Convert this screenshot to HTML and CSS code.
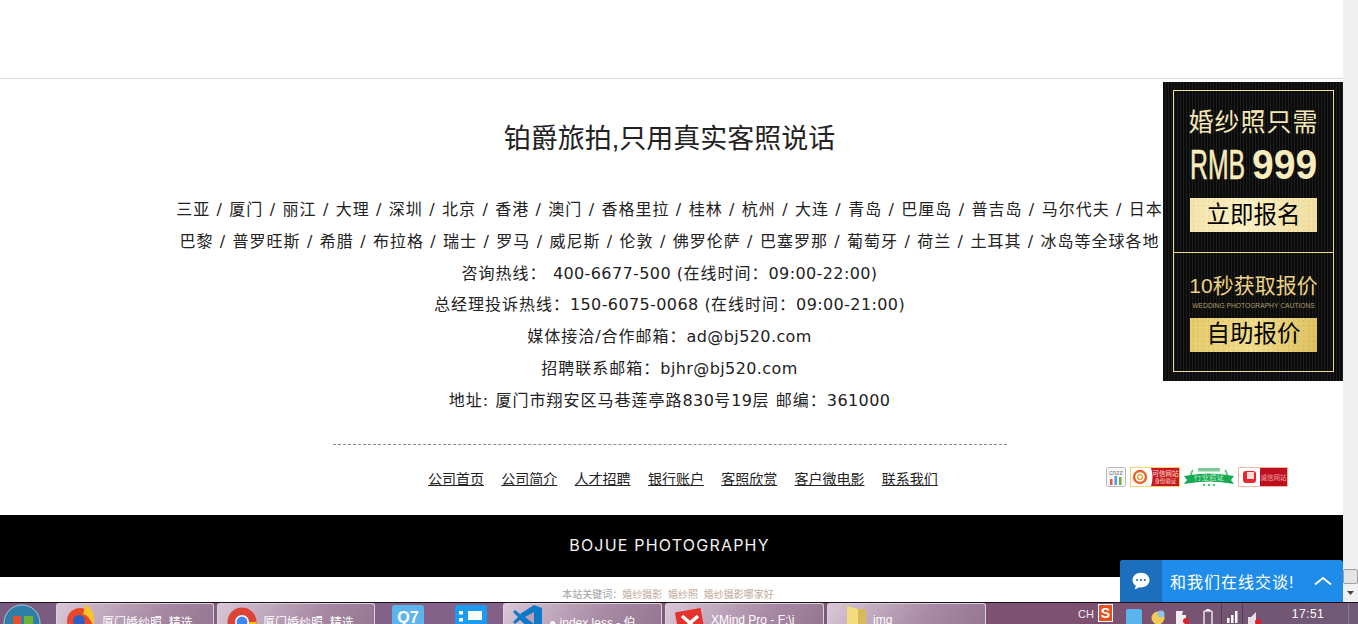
FILE: index.html
```html
<!DOCTYPE html>
<html lang="zh-CN">
  <head>
    <meta charset="UTF-8" />
    <title>铂爵旅拍</title>
    <link rel="stylesheet" href="styles.css">
  </head>
  <body>
    <div class="screen">
      <div class="browser">
        <div class="page">
          <div class="top-blank"></div>
          <div class="info">
            <h2 class="slogan">铂爵旅拍,只用真实客照说话</h2>
            <div class="lines">
              <p>三亚 / 厦门 / 丽江 / 大理 / 深圳 / 北京 / 香港 / 澳门 / 香格里拉 / 桂林 / 杭州 / 大连 / 青岛 / 巴厘岛 / 普吉岛 / 马尔代夫 / 日本</p>
              <p>巴黎 / 普罗旺斯 / 希腊 / 布拉格 / 瑞士 / 罗马 / 威尼斯 / 伦敦 / 佛罗伦萨 / 巴塞罗那 / 葡萄牙 / 荷兰 / 土耳其 / 冰岛等全球各地</p>
              <p>咨询热线： <span class="num">400-6677-500 (</span>在线时间：<span class="num">09:00-22:00)</span></p>
              <p>总经理投诉热线：<span class="num">150-6075-0068 (</span>在线时间：<span class="num">09:00-21:00)</span></p>
              <p>媒体接洽/合作邮箱：<span class="num">ad@bj520.com</span></p>
              <p>招聘联系邮箱：<span class="num">bjhr@bj520.com</span></p>
              <p>地址: 厦门市翔安区马巷莲亭路<span class="num">830</span>号<span class="num">19</span>层 邮编：<span class="num">361000</span></p>
            </div>
            <div class="dash"></div>
            <div class="link-row">
              <nav class="links">
                <a href="#">公司首页</a>
                <a href="#">公司简介</a>
                <a href="#">人才招聘</a>
                <a href="#">银行账户</a>
                <a href="#">客照欣赏</a>
                <a href="#">客户微电影</a>
                <a href="#">联系我们</a>
              </nav>
              <div class="badges">
                <svg width="20" height="20" viewBox="0 0 20 20">
                  <rect x="0.5" y="0.5" width="19" height="19" rx="1" fill="#f6f6f6" stroke="#bbb" />
                  <text x="10" y="7.500" font-size="6.500" text-anchor="middle" fill="#777" font-family="Liberation Sans">cnzz</text>
                  <rect x="4" y="12" width="2.500" height="6" fill="#e2574c" />
                  <rect x="8.500" y="9" width="2.500" height="9" fill="#4a9fd8" />
                  <rect x="13" y="10" width="2.500" height="8" fill="#6fae3e" />
                </svg>
                <svg width="50" height="20" viewBox="0 0 50 20">
                  <rect x="0.5" y="0.5" width="49" height="19" fill="#fff" stroke="#f5d36a" />
                  <path d="M21 1 H49 V19 H21 Q24 10 21 1 Z" fill="#c8161d" />
                  <circle cx="10" cy="10" r="6" fill="none" stroke="#e8622a" stroke-width="2.400" />
                  <circle cx="10" cy="10" r="2.400" fill="none" stroke="#f0a030" stroke-width="1.400" />
                  <text x="35.500" y="8.500" font-size="6.500" text-anchor="middle" fill="#fbe4df" font-family="Noto Sans CJK SC">可信网站</text>
                  <text x="35.500" y="16" font-size="5.500" text-anchor="middle" fill="#fbe4df" font-family="Noto Sans CJK SC">身份验证</text>
                </svg>
                <svg width="50" height="20" viewBox="0 0 50 20">
                  <path d="M9 3 Q5 8 9 12 M41 3 Q45 8 41 12" fill="none" stroke="#6cc08a" stroke-width="2" />
                  <rect x="14" y="1" width="22" height="3.500" fill="#7fca9a" />
                  <path d="M0 9 Q25 4 50 9 L47 13 L50 17 Q25 12 0 17 L3 13 Z" fill="#16a951" />
                  <text x="25" y="13" font-size="7.500" text-anchor="middle" fill="#c4ecd2" font-family="Noto Sans CJK SC">行业验证</text>
                  <circle cx="20" cy="18" r="1" fill="#16a951" />
                  <circle cx="25" cy="18" r="1" fill="#16a951" />
                  <circle cx="30" cy="18" r="1" fill="#16a951" />
                </svg>
                <svg width="50" height="20" viewBox="0 0 50 20">
                  <rect x="0.5" y="0.5" width="49" height="19" fill="#fff" stroke="#f2b8a0" />
                  <rect x="22" y="1" width="27" height="18" fill="#bf0f1e" />
                  <rect x="5" y="4" width="13" height="12" rx="3" fill="#e8262d" />
                  <rect x="9" y="5" width="7" height="7" fill="#fbdcd8" />
                  <text x="35.500" y="12.500" font-size="6.500" text-anchor="middle" fill="#eba6a8" font-family="Noto Sans CJK SC">诚信网站</text>
                </svg>
              </div>
            </div>
          </div>
          <div class="brand-band">BOJUE PHOTOGRAPHY</div>
          <div class="keywords">
            本站关键词：<span>婚纱摄影</span> <span>婚纱照</span> <span>婚纱摄影哪家好</span>
          </div>

          <aside class="promo">
            <div class="promo-frame">
              <div class="promo-part promo-top">
                <div class="promo-need">婚纱照只需</div>
                <div class="promo-price"><span class="price-rmb">RMB</span><b class="price-num">999</b></div>
                <div class="gold-btn">立即报名</div>
              </div>
              <div class="promo-part promo-bottom">
                <div class="promo-quote">10秒获取报价</div>
                <div class="promo-small">WEDDING PHOTOGRAPHY CAUTIONS</div>
                <div class="gold-btn gold-dark">自助报价</div>
              </div>
            </div>
          </aside>

          <div class="chat">
            <div class="chat-icon">
              <svg width="18" height="18" viewBox="0 0 18 18">
                <path d="M9 .7C4.2.7.5 3.9.5 8c0 2.400 1.300 4.500 3.300 5.800-.1 1.200-.6 2.400-1.300 3.400 1.700-.2 3.400-1 4.600-2 .6.100 1.200.2 1.900.2 4.800 0 8.500-3.300 8.500-7.400S13.800.7 9 .7z" fill="#fff" />
                <circle cx="5.200" cy="8" r="1.100" fill="#1c6fbc" />
                <circle cx="9" cy="8" r="1.100" fill="#1c6fbc" />
                <circle cx="12.800" cy="8" r="1.100" fill="#1c6fbc" />
              </svg>
            </div>
            <div class="chat-text">和我们在线交谈!</div>
            <svg class="chat-arrow" width="18" height="10" viewBox="0 0 18 10">
              <path d="M1 8.500 L9 2 L17 8.500" fill="none" stroke="#fff" stroke-width="1.800" />
            </svg>
          </div>
        </div>

        <div class="scrollbar">
          <div class="scroll-track"></div>
          <div class="scroll-thumb"></div>
          <div class="scroll-down">
            <svg width="7" height="4" viewBox="0 0 7 4"><path d="M0 0 H7 L3.500 4 Z" fill="#444" /></svg>
          </div>
        </div>
      </div>

      <div class="taskbar">
        <div class="start-orb">
          <svg width="38" height="38" viewBox="0 0 38 38">
            <circle cx="19" cy="19" r="18" fill="#2f7ea8" stroke="#a9c8d8" />
            <rect x="10" y="12" width="8" height="8" fill="#e2502c" />
            <rect x="21" y="12" width="9" height="8" fill="#6fb23a" />
          </svg>
        </div>
        <div class="task-tab">
          <svg class="task-icon icon-fox" width="30" height="30" viewBox="0 0 30 30">
            <circle cx="14" cy="17" r="13" fill="#e8472a" />
            <circle cx="13" cy="17" r="6" fill="#2f5fc0" />
            <path d="M20 0 Q31 9 27 22 Q24 12 17 10 Z" fill="#f7c52b" />
          </svg>
          <span>厦门婚纱照_精选</span>
        </div>
        <div class="task-tab">
          <svg class="task-icon icon-chrome" width="30" height="30" viewBox="0 0 30 30">
            <circle cx="15" cy="15" r="14.500" fill="#db4437" />
            <path d="M15 15 L28 22 A14.500 14.500 0 0 1 2 22 Z" fill="#0f9d58" />
            <path d="M15 15 H29.500 A14.500 14.500 0 0 1 23 27 Z" fill="#f4c20d" />
            <circle cx="15" cy="15" r="7" fill="#fff" />
            <circle cx="15" cy="15" r="5.400" fill="#4285f4" />
          </svg>
          <span>厦门婚纱照_精选</span>
        </div>
        <div class="pinned">
          <div class="pin-tile pin-qq">Q7</div>
          <div class="pin-tile pin-list">
            <svg width="32" height="21" viewBox="0 0 32 21">
              <rect x="4" y="6" width="4" height="3.500" fill="#fff" />
              <rect x="4" y="13" width="4" height="3.500" fill="#fff" />
              <rect x="13" y="6" width="14" height="9" fill="#fff" />
            </svg>
          </div>
        </div>
        <div class="task-tab task-tab-wide">
          <svg class="task-icon icon-fox" width="30" height="30" viewBox="0 0 30 30">
            <path d="M21 1 L29 4 V26 L21 29 L7 16 L2 20 L0 18 L5 13 L0 8 L2 6 L7 10 Z" fill="#0f78c8" />
            <path d="M21 8 L12 13 L21 20 Z" fill="#b9a2b8" />
          </svg>
          <span>● index.less - 伯</span>
        </div>
        <div class="task-tab task-tab-wide">
          <svg class="task-icon icon-xmind" width="30" height="30" viewBox="0 0 30 30">
            <rect x="2" y="2" width="26" height="26" transform="rotate(-10 15 15)" fill="#e5322d" />
            <path d="M7 8 L15 15 L23 8 M10 22 L15 15 L21 22" fill="none" stroke="#fff" stroke-width="3.500" />
          </svg>
          <span>XMind Pro - F:\i</span>
        </div>
        <div class="task-tab task-tab-wide">
          <svg class="task-icon" width="30" height="30" viewBox="0 0 30 30">
            <path d="M10 0 L21 3 V30 H10 Z" fill="#f4dc7e" />
            <path d="M21 3 H29 V30 H21 Z" fill="#d9b95a" />
          </svg>
          <span>img</span>
        </div>
        <div class="tray">
          <span class="tray-lang">CH</span>
          <span class="tray-sogou">S</span>
          <span class="tray-qq"></span>
          <svg width="16" height="16" viewBox="0 0 16 16"><circle cx="8" cy="9" r="6.500" fill="#f2cc55" /><circle cx="11" cy="5" r="3.500" fill="#8cc4ea" /></svg>
          <svg width="16" height="16" viewBox="0 0 16 16"><path d="M2 2 H9 L8 6 H12 V16 H2 Z" fill="#f2eef2" /><circle cx="12" cy="12" r="3" fill="#d8202a" /></svg>
          <svg class="tray-batt" width="10" height="16" viewBox="0 0 10 16"><rect x="1" y="2" width="8" height="14" rx="1" fill="none" stroke="#eee" stroke-width="1.400" /><rect x="3" y="0" width="4" height="2" fill="#eee" /></svg>
          <div class="tray-seps">
            <div class="tray-sep">
              <svg width="12" height="14" viewBox="0 0 12 14"><rect x="0" y="9" width="2.500" height="5" fill="#fff" /><rect x="4" y="6" width="2.500" height="8" fill="#fff" /><rect x="8" y="2" width="2.500" height="12" fill="#fff" /></svg>
            </div>
            <div class="tray-sep">
              <svg width="14" height="16" viewBox="0 0 14 16"><path d="M0 8 H3 L8 3 V16 H0 Z" fill="#e6e0e6" /><circle cx="10" cy="13" r="3" fill="#d8202a" /></svg>
            </div>
          </div>
          <div class="clock">17:51</div>
          <div class="show-desktop"></div>
        </div>
      </div>
    </div>
  </body>
</html>
```

FILE: styles.css
```css
* {
  box-sizing: border-box;
}
html,
body {
  margin: 0;
  height: 100%;
  overflow: hidden;
}
body {
  font-family: "Liberation Sans", "Noto Sans CJK SC", sans-serif;
  color: #222;
  background-color: #fff;
}
.screen {
  height: 100vh;
  display: flex;
  flex-direction: column;
}
.browser {
  flex: 1;
  min-height: 0;
  display: flex;
}
.page {
  flex: 1;
  min-width: 0;
  position: relative;
  overflow: hidden;
}
.top-blank {
  height: 79px;
  border-bottom: 1px solid #d9d9d9;
}
.info {
  height: 436px;
  padding-right: 4px;
  text-align: center;
}
.slogan {
  margin: 0;
  padding-top: 42px;
  font-size: 27px;
  line-height: 36px;
  font-weight: 400;
}
.lines {
  margin-top: 37px;
  font-family: "DejaVu Sans", "Noto Sans CJK SC", sans-serif;
  font-size: 16px;
  line-height: 31.8px;
  letter-spacing: 1px;
  word-spacing: .3px;
  white-space: nowrap;
}
.lines p {
  margin: 0;
}
.num {
  letter-spacing: .4px;
}
.dash {
  width: 674px;
  margin: 27.3px auto 0;
  border-top: 1px dashed #8a8a8a;
}
.link-row {
  margin-top: 22px;
  padding-left: 428px;
  padding-right: 51px;
  display: flex;
  align-items: center;
  justify-content: space-between;
}
.links {
  display: flex;
  gap: 17.3px;
  padding-top: 1px;
  font-size: 14px;
}
.links a {
  color: #222;
  text-decoration: underline;
}
.badges {
  display: flex;
  gap: 4px;
}
.brand-band {
  height: 62px;
  padding: 0 4px 2px 0;
  background-color: #000;
  color: #f2f2f2;
  display: flex;
  align-items: center;
  justify-content: center;
  font-family: Inter, sans-serif;
  font-size: 16px;
  letter-spacing: 1.2px;
}
.keywords {
  height: 25px;
  padding-top: 11px;
  padding-right: 4px;
  text-align: center;
  font-size: 10px;
  line-height: 14px;
  color: #a0a0a0;
}
.keywords span {
  color: #bfa998;
  margin-right: 3px;
}

/* floating ad */
.promo {
  position: absolute;
  left: 1163px;
  top: 82px;
  width: 180px;
  height: 299px;
  padding: 8px 9px 9px 10px;
  background: repeating-linear-gradient(90deg, #0b0b0b 0, #0b0b0b 2px, #1c1c1a 2px, #1c1c1a 3px);
}
.promo-frame {
  height: 100%;
  border: 1px solid #f0dc9c;
  display: flex;
  flex-direction: column;
}
.promo-part {
  display: flex;
  flex-direction: column;
  align-items: center;
}
.promo-top {
  height: 162px;
  padding-top: 15px;
  border-bottom: 1px solid #f0d88c;
}
.promo-need {
  font-size: 25px;
  line-height: 32px;
  letter-spacing: 1px;
  color: #f6e8b8;
}
.promo-price {
  width: 127px;
  margin-top: 3px;
  font-size: 42px;
  line-height: 48px;
  color: #f8ecbc;
  display: flex;
  justify-content: space-between;
  white-space: nowrap;
}
.price-rmb {
  width: 55px;
  transform: scaleX(.59);
  transform-origin: left;
  -webkit-text-stroke: .6px #f8ecbc;
}
.price-num {
  width: 65px;
  transform: scaleX(.93);
  transform-origin: left;
}
.gold-btn {
  width: 127px;
  height: 34px;
  background:
    radial-gradient(circle at 30% 40%, rgba(255, 255, 255, .35) 0, transparent 1px) 0 0 / 4px 4px,
    radial-gradient(circle at 70% 60%, rgba(190, 150, 60, .3) 0, transparent 1px) 0 0 / 5px 5px,
    linear-gradient(100deg, #f3e3a8, #fbf0c4 45%, #efdc9c);
  color: #000;
  font-size: 23.500px;
  line-height: 32px;
  text-align: center;
}
.promo-top .gold-btn {
  margin-top: 9px;
  line-height: 34px;
}
.promo-bottom {
  padding-top: 18px;
}
.promo-quote {
  font-size: 21px;
  line-height: 30px;
  color: #ecd283;
  white-space: nowrap;
}
.promo-small {
  font-size: 6.700px;
  line-height: 10px;
  color: #b09c64;
  white-space: nowrap;
}
.gold-btn.gold-dark {
  margin-top: 7px;
  line-height: 33px;
  background:
    radial-gradient(circle at 30% 40%, rgba(255, 255, 255, .3) 0, transparent 1px) 0 0 / 4px 4px,
    radial-gradient(circle at 70% 60%, rgba(150, 110, 30, .3) 0, transparent 1px) 0 0 / 5px 5px,
    linear-gradient(100deg, #e4c968, #f1dc8a 50%, #dcbe5c);
}

/* chat widget */
.chat {
  position: absolute;
  left: 1120px;
  top: 560px;
  width: 223px;
  height: 42px;
  background-color: #1e8ce8;
  border-radius: 3px 3px 0 0;
  overflow: hidden;
  display: flex;
  align-items: center;
  color: #fff;
}
.chat-icon {
  width: 42px;
  height: 100%;
  background-color: #1c6fbc;
  display: flex;
  align-items: center;
  justify-content: center;
}
.chat-text {
  margin-left: 8px;
  font-size: 16px;
  letter-spacing: 1px;
  white-space: nowrap;
}
.chat-arrow {
  margin-left: auto;
  margin-right: 11px;
}

/* scrollbar */
.scrollbar {
  width: 15px;
  background-color: #f0f0f0;
  display: flex;
  flex-direction: column;
}
.scroll-track {
  flex: 1;
}
.scroll-thumb {
  height: 15px;
  background-color: #e4e4e4;
  border: 1px solid #a0a0a0;
  border-radius: 2px;
}
.scroll-down {
  height: 18px;
  display: flex;
  align-items: center;
  justify-content: center;
}

/* windows taskbar */
.taskbar {
  height: 22px;
  flex-shrink: 0;
  border-top: 1px solid #1a1018;
  overflow: hidden;
  display: flex;
  align-items: flex-start;
  background: linear-gradient(90deg, #7a5c80 0, #85628a 30%, #7a5878 60%, #7d5070 80%, #6f5a78 100%);
}
.start-orb {
  width: 56px;
  height: 40px;
  padding: 1px 0 0 3px;
  flex-shrink: 0;
}
.task-tab {
  width: 158px;
  height: 34px;
  margin-right: 3px;
  padding: 2px 0 0 9px;
  flex-shrink: 0;
  display: flex;
  align-items: flex-start;
  gap: 6px;
  border: 1px solid #dcd0dc;
  border-bottom: 0;
  border-radius: 3px 3px 0 0;
  background: linear-gradient(120deg, #d8c6d6, #a88aa4 60%, #94748f);
  color: #fff;
  font-size: 12px;
  white-space: nowrap;
  overflow: hidden;
}
.task-tab-wide {
  width: 159px;
}
.task-tab span {
  padding-top: 7px;
}
.task-icon {
  flex-shrink: 0;
}
.icon-fox {
  margin-top: -2px;
}
.icon-chrome {
  margin-top: 1px;
}
.icon-xmind {
  margin-top: 2px;
}
.pinned {
  width: 111px;
  margin-left: 14px;
  flex-shrink: 0;
  display: flex;
  gap: 31px;
}
.pin-tile {
  width: 32px;
  height: 28px;
  margin-top: 2px;
  border-radius: 3px;
}
.pin-qq {
  background-color: #5bb4ec;
  color: #fff;
  font-weight: 700;
  font-size: 16px;
  text-align: center;
  line-height: 26px;
}
.pin-list {
  background-color: #1c9cf0;
}
.tray {
  flex: 1;
  height: 100%;
  padding-left: 89px;
  display: flex;
  align-items: flex-start;
  gap: 8px;
  color: #fff;
}
.tray svg {
  margin-top: 6px;
  flex-shrink: 0;
}
.tray-lang {
  width: 15px;
  padding-top: 5px;
  font-size: 11px;
  color: #eee;
}
.tray-sogou {
  width: 15px;
  height: 18px;
  margin: 1px 0 0 -3px;
  background-color: #e8501e;
  border: 1px solid #fff;
  font-size: 14px;
  font-weight: 700;
  line-height: 16px;
  text-align: center;
}
.tray-qq {
  width: 16px;
  height: 16px;
  margin: 6px 0 0 5px;
  background-color: #5bb4ec;
  border-radius: 2px;
}
.tray .tray-batt {
  margin-left: 5px;
}
.tray-seps {
  display: flex;
  height: 100%;
}
.tray-sep {
  width: 21px;
  height: 100%;
  border-left: 1px solid #554058;
  padding-left: 5px;
}
.clock {
  width: 64px;
  margin-left: 5px;
  padding-top: 4px;
  font-size: 12px;
  letter-spacing: .5px;
  text-align: center;
  white-space: nowrap;
}
.show-desktop {
  margin-left: auto;
  width: 15px;
  height: 100%;
  border-left: 1px solid #8b7b90;
}
```
